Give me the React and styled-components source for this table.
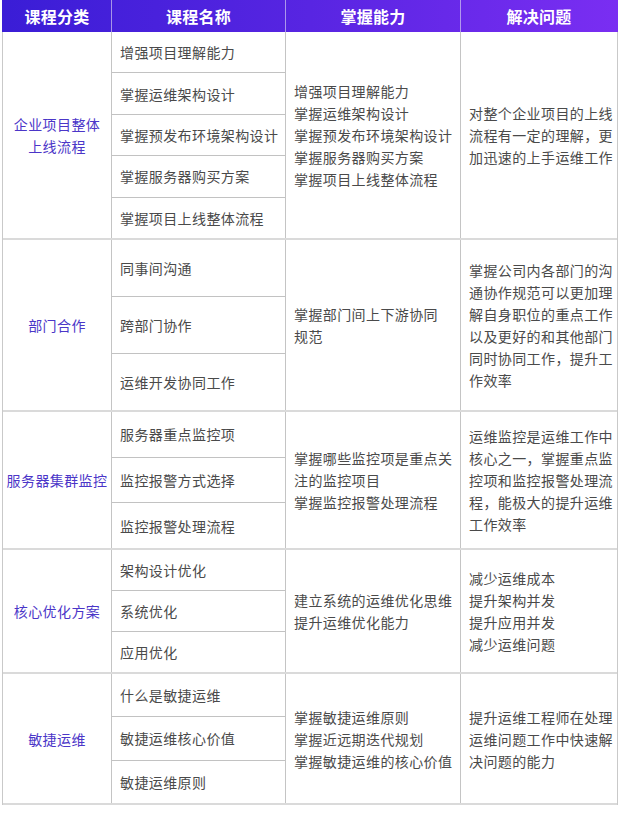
import React from "react";
import styled, { createGlobalStyle } from "styled-components";

const GlobalStyle = createGlobalStyle`
  body {
    margin: 0;
    background: #ffffff;
    font-family: "Noto Sans CJK SC", "Noto Sans", sans-serif;
  }
`;

const courses = [
  {
    category: ["企业项目整体", "上线流程"],
    height: 208,
    names: [
      "增强项目理解能力",
      "掌握运维架构设计",
      "掌握预发布环境架构设计",
      "掌握服务器购买方案",
      "掌握项目上线整体流程"
    ],
    skills: [
      "增强项目理解能力",
      "掌握运维架构设计",
      "掌握预发布环境架构设计",
      "掌握服务器购买方案",
      "掌握项目上线整体流程"
    ],
    solves: ["对整个企业项目的上线", "流程有一定的理解，更", "加迅速的上手运维工作"]
  },
  {
    category: ["部门合作"],
    height: 172,
    names: ["同事间沟通", "跨部门协作", "运维开发协同工作"],
    skills: ["掌握部门间上下游协同", "规范"],
    solves: [
      "掌握公司内各部门的沟",
      "通协作规范可以更加理",
      "解自身职位的重点工作",
      "以及更好的和其他部门",
      "同时协同工作，提升工",
      "作效率"
    ]
  },
  {
    category: ["服务器集群监控"],
    height: 138,
    names: ["服务器重点监控项", "监控报警方式选择", "监控报警处理流程"],
    skills: ["掌握哪些监控项是重点关", "注的监控项目", "掌握监控报警处理流程"],
    solves: [
      "运维监控是运维工作中",
      "核心之一，掌握重点监",
      "控项和监控报警处理流",
      "程，能极大的提升运维",
      "工作效率"
    ]
  },
  {
    category: ["核心优化方案"],
    height: 124,
    names: ["架构设计优化", "系统优化", "应用优化"],
    skills: ["建立系统的运维优化思维", "提升运维优化能力"],
    solves: ["减少运维成本", "提升架构并发", "提升应用并发", "减少运维问题"]
  },
  {
    category: ["敏捷运维"],
    height: 131,
    names: ["什么是敏捷运维", "敏捷运维核心价值", "敏捷运维原则"],
    skills: ["掌握敏捷运维原则", "掌握近远期迭代规划", "掌握敏捷运维的核心价值"],
    solves: ["提升运维工程师在处理", "运维问题工作中快速解", "决问题的能力"]
  }
];

const headers = ["课程分类", "课程名称", "掌握能力", "解决问题"];

const Table = styled.div`
  width: 616px;
  margin: 0 2px;
  box-sizing: border-box;
  border-left: 1px solid #c9c9c9;
  border-right: 1px solid #c9c9c9;
`;

const Row = styled.div`
  display: grid;
  grid-template-columns: 109px 174px 175px 156px;
  height: ${p => p.$height}px;
  box-sizing: border-box;
  border-bottom: 2px solid #dadada;
`;

const HeadRow = styled.div`
  display: grid;
  grid-template-columns: 109px 174px 175px 156px;
  height: 32px;
  margin: 0 -1px;
  padding: 0 1px;
  background: linear-gradient(90deg, #3a1dd6 0%, #5825e2 50%, #7a2ef2 100%);
`;

const HeadCell = styled.div`
  display: flex;
  align-items: center;
  justify-content: center;
  color: #ffffff;
  font-size: 16px;
  font-weight: 700;
  letter-spacing: 0.3px;
  border-right: 1px solid rgba(210, 200, 240, 0.7);
  &:last-child {
    border-right: none;
  }
`;

const Cell = styled.div`
  display: flex;
  flex-direction: column;
  justify-content: center;
  align-items: ${p => (p.$center ? "center" : "flex-start")};
  text-align: ${p => (p.$center ? "center" : "left")};
  padding: 0 ${p => (p.$center ? 0 : 8)}px;
  font-size: 14px;
  letter-spacing: 0.4px;
  line-height: 22px;
  color: ${p => (p.$accent ? "#4b36c8" : "#4a4a4a")};
  border-right: 1px solid #c4c4c4;
  white-space: nowrap;
  &:last-child {
    border-right: none;
  }
`;

const NameList = styled.div`
  display: flex;
  flex-direction: column;
  border-right: 1px solid #c4c4c4;
`;

const NameItem = styled.div`
  flex: 1;
  display: flex;
  align-items: center;
  padding-left: 8px;
  font-size: 14px;
  letter-spacing: 0.4px;
  color: #4a4a4a;
  border-bottom: 1px solid #c2c2c2;
  &:last-child {
    border-bottom: none;
  }
`;

function Lines({ lines }) {
  return lines.map((line, i) => <span key={i}>{line}</span>);
}

export default function App() {
  return (
    <>
      <GlobalStyle />
      <Table>
        <HeadRow>
          {headers.map(h => (
            <HeadCell key={h}>{h}</HeadCell>
          ))}
        </HeadRow>
        {courses.map((c, i) => (
          <Row key={i} $height={c.height}>
            <Cell $center $accent>
              <Lines lines={c.category} />
            </Cell>
            <NameList>
              {c.names.map(n => (
                <NameItem key={n}>{n}</NameItem>
              ))}
            </NameList>
            <Cell>
              <Lines lines={c.skills} />
            </Cell>
            <Cell>
              <Lines lines={c.solves} />
            </Cell>
          </Row>
        ))}
      </Table>
    </>
  );
}
